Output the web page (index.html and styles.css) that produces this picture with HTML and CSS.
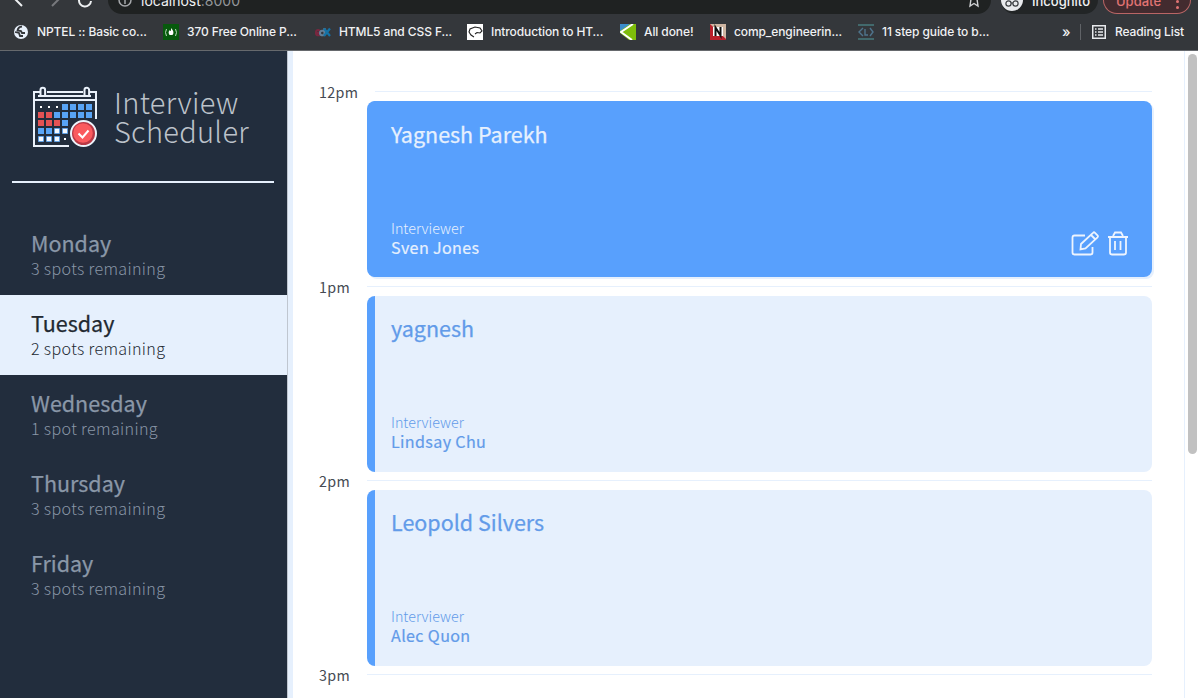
FILE: index.html
```
<!DOCTYPE html>
<html lang="en">
<head>
<meta charset="utf-8">
<title>Interview Scheduler</title>
<link rel="stylesheet" href="styles.css">
</head>
<body>
<header class="chrome">
  <div class="toolbar">
    <svg class="nav-icons" width="108" height="14" viewBox="0 0 108 14" fill="none" stroke-width="2">
      <path d="M14 -2L22 6" stroke="#eef0f2"/><path d="M61 -3L52 6" stroke="#77797d"/>
      <path d="M79 0a6 6 0 0 0 12 1" stroke="#eef0f2"/>
    </svg>
    <div class="address">
      <svg width="14" height="9" viewBox="0 0 14 9" fill="none" stroke="#a6a8ab" stroke-width="1.5"><circle cx="7" cy="0" r="6"/><path d="M7 0v4"/></svg>
      <span class="url">localhost<span class="port">:8000</span></span>
      <svg class="star" width="14" height="9" viewBox="0 0 14 9" fill="none" stroke="#d0d2d4" stroke-width="1.4"><path d="M4 -1L3 6 7 3.500 11 6 10 -1"/></svg>
    </div>
    <div class="incognito">
      <svg width="22" height="13" viewBox="0 0 22 13"><circle cx="11" cy="0" r="11" fill="#e8eaed"/><g fill="none" stroke="#3a3d41" stroke-width="1.2"><circle cx="7.5" cy="3.5" r="2.6"/><circle cx="14.5" cy="3.5" r="2.6"/><path d="M10 3h2"/></g></svg>
      <span>Incognito</span>
    </div>
    <div class="update"><span>Update</span><span class="dots"><i></i><i></i></span></div>
  </div>
  <div class="bookmarks">
    <div class="mark m1"><svg width="16" height="16" viewBox="0 0 16 16"><circle cx="8" cy="8" r="7" fill="#e8f0fb"/><path d="M9 2.500Q5 3 4.500 6.500L8 7l1 2 3 0M2 8l4 1 1 3 3 0" fill="none" stroke="#34373b" stroke-width="1.800"/></svg><span>NPTEL :: Basic co...</span></div>
    <div class="mark m2"><svg width="16" height="16" viewBox="0 0 16 16"><path fill="#07590d" d="M0 0h16v16H0z"/><path d="M3.500 5q-2 3.500 0 7M12.500 5q2 3.500 0 7" fill="none" stroke="#b9dcbb"/><path d="M8 4q4 4 1.500 7h-3Q4.500 8 7 6q0 1 1 1z" fill="#fff"/></svg><span>370 Free Online P...</span></div>
    <div class="mark m3"><svg width="16" height="16" viewBox="0 0 16 16" fill="none" stroke-width="2.200"><path d="M0 9h5q0-3-2-3T1 9t4 2" stroke="#78273f"/><path d="M9.500 4v7M9 7q-4-1-4 2t4 2" stroke="#637f98"/><path d="M9 4.500l6 7.500M15 4.500l-6 7.500" stroke="#1473a7"/></svg><span>HTML5 and CSS F...</span></div>
    <div class="mark m4"><svg width="16" height="16" viewBox="0 0 16 16"><path fill="#fff" d="M0 0h16v16H0z"/><path d="M7 13L4 11 2 8l1-3 5-2 5 1 2 3-2 2-3-.5-2 1.500" fill="none" stroke="#222" stroke-width="1.100"/></svg><span>Introduction to HT...</span></div>
    <div class="mark m5"><svg width="16" height="16" viewBox="0 0 16 16"><path fill="#7ebc0a" d="M0 0h16v16H0z"/><path fill="#3b8dcc" d="M0 0h10L0 7z"/><path fill="#34373b" d="M0 9v7h9z"/><path d="M13 0L1 8l11 8" fill="none" stroke="#fff" stroke-width="2"/></svg><span>All done!</span></div>
    <div class="mark m6"><svg width="16" height="16" viewBox="0 0 16 16"><path fill="#b8202b" d="M0 0h16v16H0z"/><path fill="#ceb5a2" d="M0 0h16v15z"/><path fill="#fff" d="M3 3h10v9H3z"/><path d="M5.500 12V3.500l5 8V3" fill="none" stroke="#111" stroke-width="2"/></svg><span>comp_engineerin...</span></div>
    <div class="mark m7"><svg width="16" height="16" viewBox="0 0 16 16" fill="none"><path d="M0 1h16M0 15h16" stroke="#477b7e" stroke-width="1.300"/><path d="M5 4L1 8l4 4M7 5v6h3M12 4l3 4-3 4" stroke="#4f748c" stroke-width="1.400"/></svg><span>11 step guide to b...</span></div>
    <span class="more">»</span>
    <div class="reading"><svg width="14" height="14" viewBox="0 0 14 14" fill="none" stroke="#e8eaed" stroke-width="1.500"><path d="M.75.75h12.500v12.500H.75zM3 4h1.500M3 7h1.500M3 10h1.500M6 4h5M6 7h5M6 10h5"/></svg><span>Reading List</span></div>
  </div>
</header>
<div class="app">
  <aside class="sidebar">
    <div class="logo">
      <svg width="66" height="62" viewBox="0 0 66 62">
        <g fill="none" stroke="#eaf1fb" stroke-width="2"><path d="M8 6H2V60H37M2 14H64M58 6h6V33M6 10h53M15 6H51"/><path d="M8.500 9V4a2.300 2.300 0 0 1 4.600 0v5M52.500 9V4a2.300 2.300 0 0 1 4.600 0v5"/></g>
        <g fill="#fff"><path d="M8 20h2v2H8zM16 20h2v2h-2zM24 20h2v2h-2zM32 52h2v2h-2z"/></g>
        <g fill="#58a4f6"><path d="M30 18h6v6h-6zM38 18h6v6h-6zM46 18h6v6h-6zM54 18h6v6h-6zM22 26h6v6h-6zM30 26h6v6h-6zM38 26h6v6h-6zM46 26h6v6h-6zM54 26h6v6h-6zM30 34h6v6h-6zM6 42h6v6H6zM14 42h6v6h-6z"/></g>
        <g fill="#e35254"><path d="M6 26h6v6H6zM14 26h6v6h-6zM6 34h6v6H6zM14 34h6v6h-6zM22 34h6v6h-6z"/></g>
        <g fill="#f4f8ff" stroke="#58a4f6" stroke-width=".8"><path d="M22.500 42.500h5v5h-5zM30.500 42.500h5v5h-5zM6.500 50.500h5v5h-5zM14.500 50.500h5v5h-5zM22.500 50.500h5v5h-5z"/></g>
        <circle cx="51.500" cy="47.500" r="14" fill="#222d3d"/><circle cx="51.500" cy="47.500" r="12.500" fill="#b83845" stroke="#edf3fb" stroke-width="2"/><circle cx="51" cy="47" r="9.800" fill="#fa5a5e"/>
        <path d="M46.500 47.500l4 4 6-7" fill="none" stroke="#fff" stroke-width="2"/>
      </svg>
      <div class="wordmark"><span>Interview</span><span>Scheduler</span></div>
    </div>
    <hr class="rule">
    <nav class="days">
      <div class="day"><h2>Monday</h2><p>3 spots remaining</p></div>
      <div class="day selected"><h2>Tuesday</h2><p>2 spots remaining</p></div>
      <div class="day"><h2>Wednesday</h2><p>1 spot remaining</p></div>
      <div class="day"><h2>Thursday</h2><p>3 spots remaining</p></div>
      <div class="day"><h2>Friday</h2><p>3 spots remaining</p></div>
    </nav>
  </aside>
  <main class="schedule">
    <section class="slot first">
      <div class="hour"><h4>12pm</h4><hr></div>
      <article class="card active"><h2>Yagnesh Parekh</h2><h4>Interviewer</h4><h3>Sven Jones</h3>
        <svg class="actions" width="58" height="26" viewBox="0 0 58 26" fill="none" stroke="#edf4fe" stroke-width="1.800"><path d="M14 4.500H3.500q-2 0-2 2v15q0 2 2 2h16q2 0 2-2V16"/><path d="M10 13L22 1.800q1-1 2 0l2.500 2.500q1 1 0 2L14.500 17.500l-5 1zM20 4l4.500 4.500"/><path d="M37 6h20M39 6v15.500q0 2 2 2h12q2 0 2-2V6M42 5l2-3.500h6L52 5M44 10v9M49.500 10v9"/></svg>
      </article>
    </section>
    <section class="slot">
      <div class="hour"><h4>1pm</h4><hr></div>
      <article class="card"><h2>yagnesh</h2><h4>Interviewer</h4><h3>Lindsay Chu</h3></article>
    </section>
    <section class="slot">
      <div class="hour"><h4>2pm</h4><hr></div>
      <article class="card"><h2>Leopold Silvers</h2><h4>Interviewer</h4><h3>Alec Quon</h3></article>
    </section>
    <section class="slot">
      <div class="hour"><h4>3pm</h4><hr></div>
    </section>
  </main>
  <div class="scrollbar"><div class="thumb"></div></div>
</div>
</body>
</html>
```
FILE: styles.css
```
* { box-sizing: border-box; }
body { margin: 0; width: 1198px; height: 698px; overflow: hidden; display: flex; flex-direction: column; background: #fff; font-family: "Noto Sans CJK JP", "Noto Sans", sans-serif; }
h2, h3, h4, p, hr { margin: 0; border: 0; }
svg { display: block; flex: none; }

.chrome { height: 51px; flex: none; background: #34373b; border-bottom: 1px solid #66696d; color: #f0f1f3; font-family: Inter, sans-serif; }
.toolbar { height: 14px; display: flex; align-items: flex-start; overflow: hidden; }
.address { width: 883px; height: 14px; border-radius: 0 0 14px 14px; background: #1f2222; display: flex; padding: 0 10px; gap: 9px; }
.url { font-size: 14px; line-height: 18px; margin-top: -8px; }
.port { color: #95989b; }
.star { margin-left: auto; }
.incognito { width: 97px; height: 14px; margin-left: 10px; border-radius: 0 0 14px 14px; background: #222526; display: flex; gap: 9px; }
.incognito span { font-size: 13px; line-height: 18px; margin-top: -8px; font-weight: 500; }
.update { width: 88px; height: 14px; margin-left: 5px; border: 1px solid #b96565; border-top: 0; border-radius: 0 0 14px 14px; background: #432b2f; color: #e27474; display: flex; padding-left: 12px; }
.update span { font-size: 13px; line-height: 18px; margin-top: -8px; font-weight: 500; }
.update .dots { display: flex; flex-direction: column; gap: 3px; margin: 0 0 0 15px; }
.dots i { width: 3px; height: 3px; border-radius: 50%; background: #e27474; }
.bookmarks { height: 35px; display: flex; align-items: center; font-size: 12px; font-weight: 500; letter-spacing: -.1px; padding-left: 13px; }
.mark { display: flex; align-items: center; gap: 8px; white-space: nowrap; }
.m1 { width: 150px; } .m2 { width: 152px; } .m3 { width: 152px; } .m4 { width: 153px; } .m5 { width: 90px; } .m6 { width: 148px; } .m7 { width: 204px; }
.more { width: 18px; font-size: 14px; line-height: 16px; }
.reading { height: 16px; display: flex; align-items: center; gap: 9px; border-left: 1px solid #606367; padding-left: 11px; white-space: nowrap; }

.app { flex: 1; min-height: 0; display: flex; }
.sidebar { width: 293px; flex: none; border-right: 5px solid #e6f0fd; box-shadow: inset -1px 0 #bfc6d0; background: #222d3d; }
.logo { height: 130px; display: flex; padding: 35px 0 0 32px; gap: 16px; }
.wordmark { display: flex; flex-direction: column; font-size: 29px; line-height: 29px; font-weight: 300; color: #bcc2ca; letter-spacing: .3px; padding-top: 1px; }
.rule { width: 262px; height: 2px; margin-left: 12px; background: #e6f0fd; }
.days { padding-top: 32px; width: 287px; }
.day { height: 80px; padding: 13px 31px 0; color: #8a97a8; }
.day h2 { font-size: 21.500px; line-height: 30px; font-weight: 400; -webkit-text-stroke: .25px currentColor; }
.day p { font-size: 16.100px; line-height: 20px; font-weight: 300; letter-spacing: .34px; }
.day.selected { background: #e6f0fd; color: #222931; }

.schedule { flex: 1; min-width: 0; overflow: hidden; padding: 31.150px 32px 0 26px; border-right: 1px solid #e6f0fd; }
.slot { height: 194.400px; }
.hour { height: 19px; display: flex; align-items: center; }
.hour h4 { width: 48px; flex: none; font-size: 14.300px; line-height: 19px; font-weight: 400; letter-spacing: .3px; color: #454a53; white-space: nowrap; }
.hour hr { flex: 1; height: 1px; background: #e6f0fd; }
.first .hour hr { margin-left: 8px; }
.card { position: relative; height: 176px; margin-left: 48px; border-radius: 8px; border-left: 8px solid #58a0fd; background: #e6f0fd; padding: 17.500px 16px; color: #629be9; }
.card h2 { font-size: 21.500px; line-height: 30px; height: 101px; font-weight: 400; -webkit-text-stroke: .25px currentColor; }
.card h4 { font-size: 14.300px; line-height: 16px; height: 16px; font-weight: 300; }
.card h3 { font-size: 16.100px; line-height: 22px; font-weight: 400; letter-spacing: .35px; -webkit-text-stroke: .2px currentColor; }
.card.active { background: #58a0fd; color: #e6f0fd; box-shadow: 2px 2px #e6f0fd; }
.actions { position: absolute; right: 23px; bottom: 20px; }
.scrollbar { width: 13px; flex: none; padding: 3px 1px 0 3px; }
.thumb { width: 9px; height: 400px; border-radius: 5px; background: #c1c1c1; }
```
